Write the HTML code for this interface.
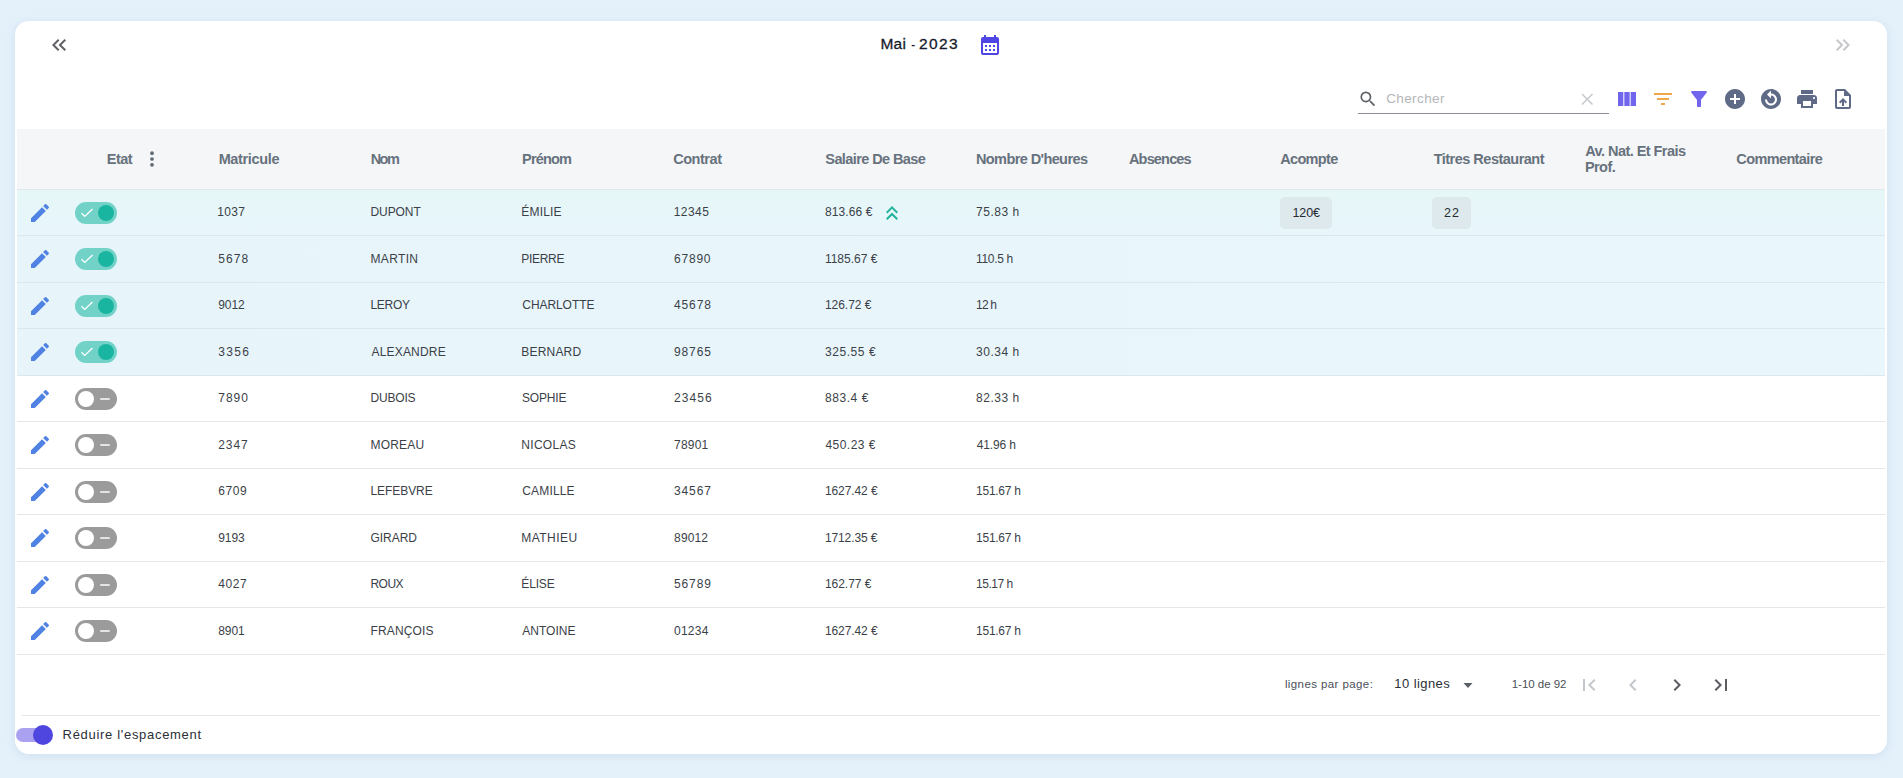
<!DOCTYPE html>
<html lang="fr">
<head>
<meta charset="utf-8">
<title>Paie - Mai 2023</title>
<style>
*{box-sizing:border-box;margin:0;padding:0}
html,body{width:1903px;height:778px;overflow:hidden}
body{background:#e4f1fb;font-family:"Liberation Sans",sans-serif;position:relative;color:#3b3f48}
.card{position:absolute;left:15px;top:21px;width:1872px;height:733px;background:#fff;border-radius:14px;box-shadow:0 2px 10px rgba(120,150,190,.18)}
.a{position:absolute;white-space:nowrap}
.thead{position:absolute;left:17px;top:129px;width:1867.5px;height:60.5px;background:#f5f6f8;border-bottom:1px solid #e3e7ec}
.th{font-weight:700;font-size:14.5px;color:#67727d;line-height:16px}
.row{position:absolute;left:17px;width:1867.5px;height:46.5px;border-bottom:1px solid #e4e6e9}
.row.on{border-bottom-color:#d9e8ee}
.td{font-size:12px;line-height:16px;color:#3b3f48}
.pen{position:absolute;left:11px;top:11.25px;width:24px;height:24px}
.tg{position:absolute;left:58px;top:12.25px;width:42px;height:22px;border-radius:11px}
.tg.on{background:#72d2c8}
.tg.off{background:#9b9b9b}
.tg i{position:absolute;top:3px;width:16px;height:16px;border-radius:50%}
.tg.on i{left:23px;background:#1ab5a0}
.tg.off i{left:3px;background:#fff}
.tg.off b{position:absolute;left:25px;top:10px;width:10px;height:2px;background:#e4e4e4;border-radius:1px}
.tg svg{position:absolute;left:5px;top:5px}
.chip{position:absolute;top:7.5px;height:32px;border-radius:5px;background:#dde9ec}
.chipt{font-size:12.5px;line-height:16px;color:#262a33}
.ttl{font-size:15.5px;line-height:20px;color:#171b2c;-webkit-text-stroke:0.3px #171b2c}
.sm{font-size:11.5px;line-height:14px;color:#4a4f57}
.md{font-size:13px;line-height:18px;color:#2b2f36}
</style>
</head>
<body>
<div class="card"></div>
<svg class="a" style="left:47.3px;top:33px" width="24" height="24" viewBox="0 0 24 24"><path fill="#5f6166" d="M17.59 18 19 16.59 14.42 12 19 7.410 17.59 6l-6 6zM11 18l1.410-1.410L7.830 12l4.580-4.590L11 6l-6 6z"/></svg>
<svg class="a" style="left:1831px;top:33px" width="24" height="24" viewBox="0 0 24 24"><path fill="#c6c7ca" d="M6.410 6 5 7.410 9.580 12 5 16.59 6.410 18l6-6zM13 6l-1.410 1.410L16.170 12l-4.580 4.590L13 18l6-6z"/></svg>
<div id="t_mai" class="a ttl" style="left:880.42px;top:34px;letter-spacing:0.29px">Mai</div>
<div id="t_dash" class="a ttl" style="left:911.3px;top:33.9px;font-size:11.5px;font-weight:700;-webkit-text-stroke:0">-</div>
<div id="t_year" class="a ttl" style="left:919.1px;top:34px;letter-spacing:1.35px">2023</div>
<svg class="a" style="left:978px;top:33px" width="24" height="24" viewBox="0 0 24 24"><path fill="#5046e4" d="M19 4h-1V2h-2v2H8V2H6v2H5c-1.110 0-1.990.900-1.990 2L3 20a2 2 0 0 0 2 2h14c1.100 0 2-.900 2-2V6c0-1.100-.900-2-2-2zm0 16H5V10h14v10zM9 14H7v-2h2v2zm4 0h-2v-2h2v2zm4 0h-2v-2h2v2zm-8 4H7v-2h2v2zm4 0h-2v-2h2v2zm4 0h-2v-2h2v2z"/></svg>
<div class="a" style="left:1358px;top:113px;width:251px;height:1px;background:#8a8d93"></div>
<svg class="a" style="left:1356px;top:87px" width="24" height="24" viewBox="0 0 24 24"><path fill="#5f6368" d="M15.5 14h-.79l-.28-.27A6.471 6.471 0 0 0 16 9.500 6.500 6.500 0 1 0 9.500 16c1.610 0 3.090-.59 4.230-1.570l.27.28v.79l5 4.990L20.490 19l-4.990-5zm-6 0C7.010 14 5 11.990 5 9.500S7.010 5 9.500 5 14 7.010 14 9.500 11.990 14 9.500 14z" transform="translate(1.9,2) scale(0.84)"/></svg>
<div id="search" class="a " style="left:1386.22px;top:90px;letter-spacing:0.38px;font-size:13.5px;line-height:18px;color:#b4b6ba">Chercher</div>
<svg class="a" style="left:1575px;top:87px" width="24" height="24" viewBox="0 0 24 24"><path d="M7 7l10.500 10.500M17.500 7 7 17.500" fill="none" stroke="#c6c8cb" stroke-width="1.500"/></svg>
<svg class="a" style="left:1615px;top:87px" width="24" height="24" viewBox="0 0 24 24"><path fill="#7165ee" d="M14.670 5v14H9.330V5h5.340zm1 14H21V5h-5.330v14zm-7.340 0V5H3v14h5.330z"/></svg>
<svg class="a" style="left:1651px;top:87px" width="24" height="24" viewBox="0 0 24 24"><path fill="#f0a94a" d="M3 6h18v2H3zM6 11h12v2H6zM10 16h4v2h-4z"/></svg>
<svg class="a" style="left:1687px;top:87px" width="24" height="24" viewBox="0 0 24 24"><path fill="#7165ee" d="M4.250 5.610C6.270 8.200 10 13 10 13v6c0 .550.450 1 1 1h2c.550 0 1-.450 1-1v-6s3.720-4.800 5.740-7.390A.998.998 0 0 0 18.950 4H5.040c-.830 0-1.300.950-.790 1.610z"/></svg>
<svg class="a" style="left:1723px;top:87px" width="24" height="24" viewBox="0 0 24 24"><path fill="#5f6a86" d="M12 2C6.480 2 2 6.480 2 12s4.480 10 10 10 10-4.480 10-10S17.520 2 12 2zm5 11h-4v4h-2v-4H7v-2h4V7h2v4h4v2z"/></svg>
<svg class="a" style="left:1759px;top:87px" width="24" height="24" viewBox="0 0 24 24"><path fill="#5f6a86" d="M12 2C6.480 2 2 6.480 2 12s4.480 10 10 10 10-4.480 10-10S17.520 2 12 2zm6 10.500c0 3.310-2.690 6-6 6s-6-2.690-6-6h2c0 2.210 1.790 4 4 4s4-1.790 4-4-1.790-4-4-4v3l-4-4 4-4v3c3.310 0 6 2.690 6 6z"/></svg>
<svg class="a" style="left:1795px;top:87px" width="24" height="24" viewBox="0 0 24 24"><path fill="#5f6a86" d="M19 8H5c-1.660 0-3 1.340-3 3v6h4v4h12v-4h4v-6c0-1.660-1.340-3-3-3zm-3 11H8v-5h8v5zm3-7c-.550 0-1-.450-1-1s.450-1 1-1 1 .450 1 1-.450 1-1 1zm-1-9H6v4h12V3z"/></svg>
<svg class="a" style="left:1831px;top:87px" width="24" height="24" viewBox="0 0 24 24"><path fill="#5f6a86" d="M14 2H6c-1.100 0-1.990.900-1.990 2L4 20c0 1.100.890 2 1.990 2H18c1.100 0 2-.900 2-2V8l-6-6zm4 18H6V4h7v5h5v11zM8 15.010l1.410 1.410L11 14.840V19h2v-4.160l1.590 1.590L16 15.010 12.010 11 8 15.010z"/></svg>
<div class="thead"></div>
<div id="h_etat" class="a th" style="left:106.7px;top:151px;letter-spacing:-0.47px">Etat</div>
<svg class="a" style="left:140.200px;top:147px" width="24" height="24" viewBox="0 0 24 24"><g fill="#5e6974"><circle cx="12" cy="6.200" r="1.850"/><circle cx="12" cy="12" r="1.850"/><circle cx="12" cy="17.800" r="1.850"/></g></svg>
<div id="h0" class="a th" style="left:218.64px;top:151px;letter-spacing:-0.35px">Matricule</div>
<div id="h1" class="a th" style="left:370.7px;top:151px;letter-spacing:-1.57px">Nom</div>
<div id="h2" class="a th" style="left:522.1px;top:151px;letter-spacing:-0.82px">Prénom</div>
<div id="h3" class="a th" style="left:673.18px;top:151px;letter-spacing:-0.46px">Contrat</div>
<div id="h4" class="a th" style="left:825.3px;top:151px;letter-spacing:-0.59px">Salaire De Base</div>
<div id="h5" class="a th" style="left:975.96px;top:151px;letter-spacing:-0.59px">Nombre D'heures</div>
<div id="h6" class="a th" style="left:1128.98px;top:151px;letter-spacing:-0.83px">Absences</div>
<div id="h7" class="a th" style="left:1280.24px;top:151px;letter-spacing:-0.68px">Acompte</div>
<div id="h8" class="a th" style="left:1433.7px;top:151px;letter-spacing:-0.51px">Titres Restaurant</div>
<div id="h9a" class="a th" style="left:1585.24px;top:143px;letter-spacing:-0.55px">Av. Nat. Et Frais</div>
<div id="h9b" class="a th" style="left:1584.88px;top:159px;letter-spacing:-0.54px">Prof.</div>
<div id="h10" class="a th" style="left:1736.3px;top:151px;letter-spacing:-0.62px">Commentaire</div>
<div class="row on" style="top:189.5px;background:linear-gradient(180deg,#e6f7f7 0%,#e7f6fa 70%,#e8f6fb 100%)"><svg class="pen" viewBox="0 0 24 24"><path fill="#4f82e2" d="M3 17.250V21h3.750L17.810 9.940l-3.750-3.750L3 17.250zM20.710 7.040a.996.996 0 0 0 0-1.410l-2.340-2.340a.996.996 0 0 0-1.410 0l-1.830 1.830 3.750 3.750 1.830-1.830z"/></svg><span class="tg on"><svg width="14" height="12" viewBox="0 0 14 12"><path d="M1.500 6.200 4.700 9.400 12.500 2" fill="none" stroke="#fff" stroke-width="1.300"/></svg><i></i></span><svg class="a" style="left:863.2px;top:11.4px" width="24" height="24" viewBox="0 0 24 24"><path fill="#22b39d" d="M6 17.590 7.410 19 12 14.420 16.590 19 18 17.590l-6-6zM6 11l1.410 1.410L12 7.830l4.590 4.580L18 11l-6-6z"/></svg><span class="chip" style="left:1263.2px;width:51.7px"></span><span class="chip" style="left:1415.1px;width:39.1px"></span></div>
<div id="r0c0" class="a td" style="left:217.3px;top:204.24px;letter-spacing:0.31px">1037</div>
<div id="r0c1" class="a td" style="left:370.5px;top:204.24px;letter-spacing:-0.09px">DUPONT</div>
<div id="r0c2" class="a td" style="left:521.3px;top:204.24px;letter-spacing:0.19px">ÉMILIE</div>
<div id="r0c3" class="a td" style="left:673.64px;top:204.24px;letter-spacing:0.47px">12345</div>
<div id="r0c4" class="a td" style="left:824.9px;top:204.24px;letter-spacing:0.13px">813.66 €</div>
<div id="r0c5" class="a td" style="left:976.1px;top:204.24px;letter-spacing:0.49px">75.83 h</div>
<div class="row on" style="top:236px;background:linear-gradient(90deg,#e7f5fb 0%,#e9f6fb 100%)"><svg class="pen" viewBox="0 0 24 24"><path fill="#4f82e2" d="M3 17.250V21h3.750L17.810 9.940l-3.750-3.750L3 17.250zM20.710 7.040a.996.996 0 0 0 0-1.410l-2.340-2.340a.996.996 0 0 0-1.410 0l-1.830 1.830 3.750 3.750 1.830-1.830z"/></svg><span class="tg on"><svg width="14" height="12" viewBox="0 0 14 12"><path d="M1.500 6.200 4.700 9.400 12.500 2" fill="none" stroke="#fff" stroke-width="1.300"/></svg><i></i></span></div>
<div id="r1c0" class="a td" style="left:218.3px;top:250.74px;letter-spacing:1.02px">5678</div>
<div id="r1c1" class="a td" style="left:370.5px;top:250.74px;letter-spacing:0.34px">MARTIN</div>
<div id="r1c2" class="a td" style="left:521.3px;top:250.74px;letter-spacing:-0.3px">PIERRE</div>
<div id="r1c3" class="a td" style="left:674.1px;top:250.74px;letter-spacing:0.76px">67890</div>
<div id="r1c4" class="a td" style="left:824.9px;top:250.74px;letter-spacing:0.01px">1185.67 €</div>
<div id="r1c5" class="a td" style="left:976.1px;top:250.74px;letter-spacing:-0.34px">110.5 h</div>
<div class="row on" style="top:282.5px;background:linear-gradient(90deg,#e7f5fb 0%,#e9f6fb 100%)"><svg class="pen" viewBox="0 0 24 24"><path fill="#4f82e2" d="M3 17.250V21h3.750L17.810 9.940l-3.750-3.750L3 17.250zM20.710 7.040a.996.996 0 0 0 0-1.410l-2.340-2.340a.996.996 0 0 0-1.410 0l-1.830 1.830 3.750 3.750 1.830-1.830z"/></svg><span class="tg on"><svg width="14" height="12" viewBox="0 0 14 12"><path d="M1.500 6.200 4.700 9.400 12.500 2" fill="none" stroke="#fff" stroke-width="1.300"/></svg><i></i></span></div>
<div id="r2c0" class="a td" style="left:218.3px;top:297.24px;letter-spacing:-0.12px">9012</div>
<div id="r2c1" class="a td" style="left:370.5px;top:297.24px;letter-spacing:-0.32px">LEROY</div>
<div id="r2c2" class="a td" style="left:522.3px;top:297.24px;letter-spacing:-0.07px">CHARLOTTE</div>
<div id="r2c3" class="a td" style="left:674.1px;top:297.24px;letter-spacing:0.84px">45678</div>
<div id="r2c4" class="a td" style="left:824.9px;top:297.24px;letter-spacing:-0.03px">126.72 €</div>
<div id="r2c5" class="a td" style="left:976.1px;top:297.24px;letter-spacing:-0.84px">12 h</div>
<div class="row on" style="top:329px;background:linear-gradient(90deg,#e7f5fb 0%,#e9f6fb 100%)"><svg class="pen" viewBox="0 0 24 24"><path fill="#4f82e2" d="M3 17.250V21h3.750L17.810 9.940l-3.750-3.750L3 17.250zM20.710 7.040a.996.996 0 0 0 0-1.410l-2.340-2.340a.996.996 0 0 0-1.410 0l-1.830 1.830 3.750 3.750 1.830-1.830z"/></svg><span class="tg on"><svg width="14" height="12" viewBox="0 0 14 12"><path d="M1.500 6.200 4.700 9.400 12.500 2" fill="none" stroke="#fff" stroke-width="1.300"/></svg><i></i></span></div>
<div id="r3c0" class="a td" style="left:218.3px;top:343.74px;letter-spacing:1.29px">3356</div>
<div id="r3c1" class="a td" style="left:371.5px;top:343.74px;letter-spacing:0.18px">ALEXANDRE</div>
<div id="r3c2" class="a td" style="left:521.3px;top:343.74px;letter-spacing:0.19px">BERNARD</div>
<div id="r3c3" class="a td" style="left:674.1px;top:343.74px;letter-spacing:0.84px">98765</div>
<div id="r3c4" class="a td" style="left:824.9px;top:343.74px;letter-spacing:0.58px">325.55 €</div>
<div id="r3c5" class="a td" style="left:976.1px;top:343.74px;letter-spacing:0.51px">30.34 h</div>
<div class="row" style="top:375.5px"><svg class="pen" viewBox="0 0 24 24"><path fill="#4f82e2" d="M3 17.250V21h3.750L17.810 9.940l-3.750-3.750L3 17.250zM20.710 7.040a.996.996 0 0 0 0-1.410l-2.340-2.340a.996.996 0 0 0-1.410 0l-1.830 1.830 3.750 3.750 1.830-1.830z"/></svg><span class="tg off"><i></i><b></b></span></div>
<div id="r4c0" class="a td" style="left:218.3px;top:390.24px;letter-spacing:0.94px">7890</div>
<div id="r4c1" class="a td" style="left:370.5px;top:390.24px;letter-spacing:-0.19px">DUBOIS</div>
<div id="r4c2" class="a td" style="left:521.96px;top:390.24px;letter-spacing:-0.16px">SOPHIE</div>
<div id="r4c3" class="a td" style="left:674.1px;top:390.24px;letter-spacing:1.07px">23456</div>
<div id="r4c4" class="a td" style="left:824.9px;top:390.24px;letter-spacing:0.59px">883.4 €</div>
<div id="r4c5" class="a td" style="left:976.1px;top:390.24px;letter-spacing:0.51px">82.33 h</div>
<div class="row" style="top:422px"><svg class="pen" viewBox="0 0 24 24"><path fill="#4f82e2" d="M3 17.250V21h3.750L17.810 9.940l-3.750-3.750L3 17.250zM20.710 7.040a.996.996 0 0 0 0-1.410l-2.340-2.340a.996.996 0 0 0-1.410 0l-1.830 1.830 3.750 3.750 1.830-1.830z"/></svg><span class="tg off"><i></i><b></b></span></div>
<div id="r5c0" class="a td" style="left:218.3px;top:436.74px;letter-spacing:0.89px">2347</div>
<div id="r5c1" class="a td" style="left:370.5px;top:436.74px;letter-spacing:0.18px">MOREAU</div>
<div id="r5c2" class="a td" style="left:521.3px;top:436.74px;letter-spacing:0.29px">NICOLAS</div>
<div id="r5c3" class="a td" style="left:674.1px;top:436.74px;letter-spacing:0.18px">78901</div>
<div id="r5c4" class="a td" style="left:825.42px;top:436.74px;letter-spacing:0.48px">450.23 €</div>
<div id="r5c5" class="a td" style="left:976.74px;top:436.74px;letter-spacing:-0.15px">41.96 h</div>
<div class="row" style="top:468.5px"><svg class="pen" viewBox="0 0 24 24"><path fill="#4f82e2" d="M3 17.250V21h3.750L17.810 9.940l-3.750-3.750L3 17.250zM20.710 7.040a.996.996 0 0 0 0-1.410l-2.340-2.340a.996.996 0 0 0-1.410 0l-1.830 1.830 3.750 3.750 1.830-1.830z"/></svg><span class="tg off"><i></i><b></b></span></div>
<div id="r6c0" class="a td" style="left:218.3px;top:483.24px;letter-spacing:0.55px">6709</div>
<div id="r6c1" class="a td" style="left:370.5px;top:483.24px;letter-spacing:-0.07px">LEFEBVRE</div>
<div id="r6c2" class="a td" style="left:522.3px;top:483.24px;letter-spacing:0.16px">CAMILLE</div>
<div id="r6c3" class="a td" style="left:674.1px;top:483.24px;letter-spacing:0.84px">34567</div>
<div id="r6c4" class="a td" style="left:824.9px;top:483.24px;letter-spacing:-0.09px">1627.42 €</div>
<div id="r6c5" class="a td" style="left:976.1px;top:483.24px;letter-spacing:-0.28px">151.67 h</div>
<div class="row" style="top:515px"><svg class="pen" viewBox="0 0 24 24"><path fill="#4f82e2" d="M3 17.250V21h3.750L17.810 9.940l-3.750-3.750L3 17.250zM20.710 7.040a.996.996 0 0 0 0-1.410l-2.340-2.340a.996.996 0 0 0-1.410 0l-1.830 1.830 3.750 3.750 1.830-1.830z"/></svg><span class="tg off"><i></i><b></b></span></div>
<div id="r7c0" class="a td" style="left:218.3px;top:529.74px;letter-spacing:-0.12px">9193</div>
<div id="r7c1" class="a td" style="left:370.5px;top:529.74px;letter-spacing:-0.04px">GIRARD</div>
<div id="r7c2" class="a td" style="left:521.3px;top:529.74px;letter-spacing:0.45px">MATHIEU</div>
<div id="r7c3" class="a td" style="left:674.1px;top:529.74px;letter-spacing:0.14px">89012</div>
<div id="r7c4" class="a td" style="left:824.9px;top:529.74px;letter-spacing:-0.1px">1712.35 €</div>
<div id="r7c5" class="a td" style="left:976.1px;top:529.74px;letter-spacing:-0.28px">151.67 h</div>
<div class="row" style="top:561.5px"><svg class="pen" viewBox="0 0 24 24"><path fill="#4f82e2" d="M3 17.250V21h3.750L17.810 9.940l-3.750-3.750L3 17.250zM20.710 7.040a.996.996 0 0 0 0-1.410l-2.340-2.340a.996.996 0 0 0-1.410 0l-1.830 1.830 3.750 3.750 1.830-1.830z"/></svg><span class="tg off"><i></i><b></b></span></div>
<div id="r8c0" class="a td" style="left:218.3px;top:576.24px;letter-spacing:0.55px">4027</div>
<div id="r8c1" class="a td" style="left:370.5px;top:576.24px;letter-spacing:-0.55px">ROUX</div>
<div id="r8c2" class="a td" style="left:521.3px;top:576.24px;letter-spacing:-0.17px">ÉLISE</div>
<div id="r8c3" class="a td" style="left:674.1px;top:576.24px;letter-spacing:0.84px">56789</div>
<div id="r8c4" class="a td" style="left:824.9px;top:576.24px;letter-spacing:-0.03px">162.77 €</div>
<div id="r8c5" class="a td" style="left:976.1px;top:576.24px;letter-spacing:-0.51px">15.17 h</div>
<div class="row" style="top:608px"><svg class="pen" viewBox="0 0 24 24"><path fill="#4f82e2" d="M3 17.250V21h3.750L17.810 9.940l-3.750-3.750L3 17.250zM20.710 7.040a.996.996 0 0 0 0-1.410l-2.340-2.340a.996.996 0 0 0-1.410 0l-1.830 1.830 3.750 3.750 1.830-1.830z"/></svg><span class="tg off"><i></i><b></b></span></div>
<div id="r9c0" class="a td" style="left:218.3px;top:622.74px;letter-spacing:-0.12px">8901</div>
<div id="r9c1" class="a td" style="left:370.5px;top:622.74px;letter-spacing:0.15px">FRANÇOIS</div>
<div id="r9c2" class="a td" style="left:522.3px;top:622.74px;letter-spacing:0.01px">ANTOINE</div>
<div id="r9c3" class="a td" style="left:674.1px;top:622.74px;letter-spacing:0.21px">01234</div>
<div id="r9c4" class="a td" style="left:824.9px;top:622.74px;letter-spacing:-0.09px">1627.42 €</div>
<div id="r9c5" class="a td" style="left:976.1px;top:622.74px;letter-spacing:-0.28px">151.67 h</div>
<div id="chip1" class="a chipt" style="left:1292.5px;top:205px;letter-spacing:-0.12px">120€</div>
<div id="chip2" class="a chipt" style="left:1443.96px;top:205px;letter-spacing:1.08px">22</div>
<div id="f1" class="a sm" style="left:1284.88px;top:676.7px;letter-spacing:0.41px">lignes par page:</div>
<div id="f2" class="a md" style="left:1394.3px;top:675.2px;letter-spacing:0.43px">10 lignes</div>
<svg class="a" style="left:1456px;top:673px" width="24" height="24" viewBox="0 0 24 24"><path fill="#5b5f66" d="M7.500 10l4.500 5 4.500-5z"/></svg>
<div id="f3" class="a sm" style="left:1511.74px;top:676.5px;letter-spacing:-0.03px">1-10 de 92</div>
<svg class="a" style="left:1577px;top:673px" width="24" height="24" viewBox="0 0 24 24"><path fill="#c3c6cb" d="M18.410 16.590 13.820 12l4.590-4.590L17 6l-6 6 6 6zM6 6h2v12H6z"/></svg>
<svg class="a" style="left:1621px;top:673px" width="24" height="24" viewBox="0 0 24 24"><path fill="#c3c6cb" d="M15.410 7.410 14 6l-6 6 6 6 1.410-1.410L10.830 12z"/></svg>
<svg class="a" style="left:1665px;top:673px" width="24" height="24" viewBox="0 0 24 24"><path fill="#5a5c62" d="M10 6 8.590 7.410 13.170 12l-4.580 4.590L10 18l6-6z"/></svg>
<svg class="a" style="left:1709px;top:673px" width="24" height="24" viewBox="0 0 24 24"><path fill="#5a5c62" d="M5.590 7.410 10.180 12l-4.590 4.590L7 18l6-6-6-6zM16 6h2v12h-2z"/></svg>
<div class="a" style="left:22px;top:715px;width:1858px;height:1px;background:#e4e6e9"></div>
<div class="a" style="left:16px;top:728px;width:34px;height:14px;border-radius:7px;background:#aaa2f0"></div>
<div class="a" style="left:33px;top:725px;width:20px;height:20px;border-radius:50%;background:#4f46e0"></div>
<div id="reduire" class="a md" style="left:62.6px;top:725.6px;letter-spacing:0.69px">Réduire l'espacement</div>
</body>
</html>
